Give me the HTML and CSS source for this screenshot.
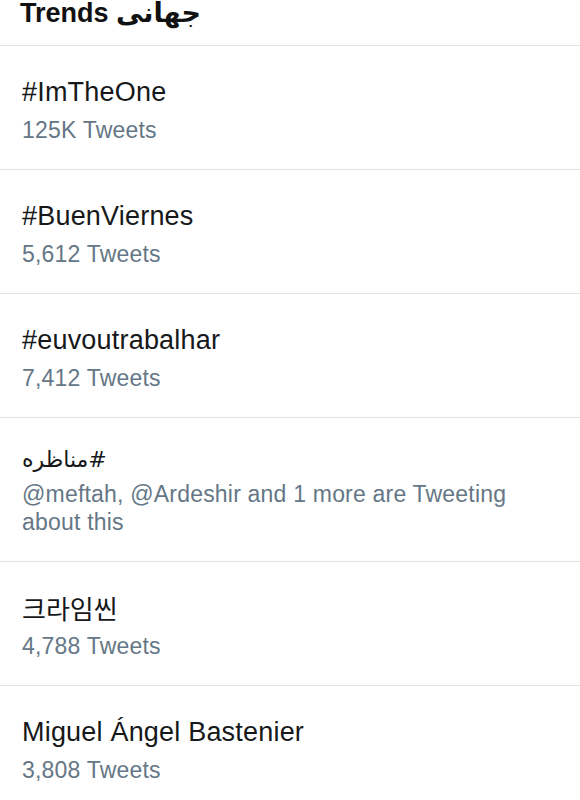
FILE: index.html
```html
<!DOCTYPE html>
<html>
<head>
<meta charset="utf-8">
<link rel="stylesheet" href="styles.css">
</head>
<body>
<div class="page">
  <div class="header">Trends <span class="fa">جهانی</span></div>
  <div class="trend">
    <div class="title">#ImTheOne</div>
    <div class="sub">125K Tweets</div>
  </div>
  <div class="trend">
    <div class="title">#BuenViernes</div>
    <div class="sub">5,612 Tweets</div>
  </div>
  <div class="trend">
    <div class="title">#euvoutrabalhar</div>
    <div class="sub">7,412 Tweets</div>
  </div>
  <div class="trend">
    <div class="title title-fa"><span dir="rtl">#مناظره</span></div>
    <div class="sub">@meftah, @Ardeshir and 1 more are Tweeting about this</div>
  </div>
  <div class="trend">
    <div class="title ko">크라임씬</div>
    <div class="sub">4,788 Tweets</div>
  </div>
  <div class="trend">
    <div class="title">Miguel Ángel Bastenier</div>
    <div class="sub">3,808 Tweets</div>
  </div>
</div>
</body>
</html>
```

FILE: styles.css
```css
html, body {
  margin: 0;
  padding: 0;
  background: #ffffff;
}
.page {
  width: 580px;
  font-family: "Liberation Sans", Arial, sans-serif;
}
.header {
  height: 47px;
  box-sizing: border-box;
  padding: 0 20px;
  margin-top: -2px;
  font-size: 27px;
  font-weight: 700;
  line-height: 30px;
  color: #111111;
}
.fa {
  font-family: "DejaVu Sans", sans-serif;
  font-size: 27px;
}
.trend {
  border-top: 1px solid #e3e3e3;
  padding: 30px 22px 25px;
}
.title {
  font-size: 27px;
  line-height: 32px;
  letter-spacing: 0.2px;
  color: #16181a;
}
.title-fa {
  font-family: "DejaVu Sans", sans-serif;
  font-size: 22px;
  line-height: 24px;
  letter-spacing: 0;
}
.ko {
  font-family: "Noto Sans CJK KR", sans-serif;
  font-size: 26px;
  letter-spacing: 0;
}
.sub {
  margin-top: 8px;
  font-size: 23px;
  line-height: 28px;
  letter-spacing: 0.2px;
  color: #657786;
  padding-right: 40px;
}
```
